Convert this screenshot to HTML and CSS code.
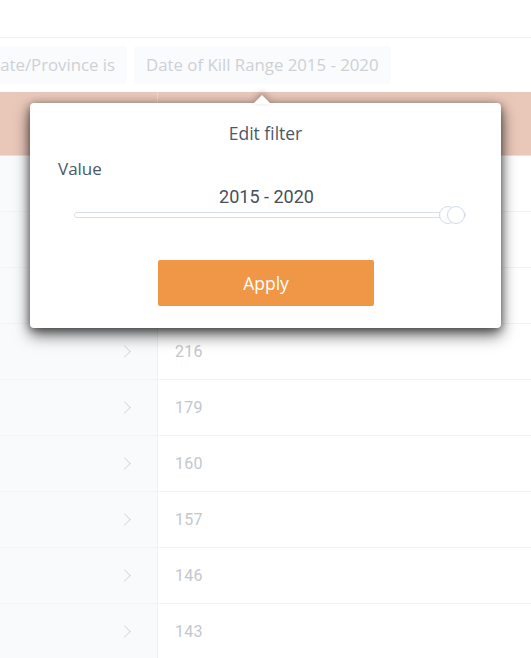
FILE: index.html
```html
<!DOCTYPE html>
<html>
<head>
<meta charset="utf-8">
<link rel="stylesheet" href="styles.css">
</head>
<body>
<div class="page">
  <div class="topbar"></div>
  <div class="filters">
    <div class="chip">State/Province is</div>
    <div class="chip">Date of Kill Range 2015 - 2020</div>
  </div>
  <div class="table">
    <div class="head-row"><div class="head-left"></div><div class="head-right"></div></div>
    <div class="row"><div class="cell-left"><span class="chev"></span></div><div class="cell-right">312</div></div>
    <div class="row"><div class="cell-left"><span class="chev"></span></div><div class="cell-right">268</div></div>
    <div class="row"><div class="cell-left"><span class="chev"></span></div><div class="cell-right">231</div></div>
    <div class="row"><div class="cell-left"><span class="chev"></span></div><div class="cell-right">216</div></div>
    <div class="row"><div class="cell-left"><span class="chev"></span></div><div class="cell-right">179</div></div>
    <div class="row"><div class="cell-left"><span class="chev"></span></div><div class="cell-right">160</div></div>
    <div class="row"><div class="cell-left"><span class="chev"></span></div><div class="cell-right">157</div></div>
    <div class="row"><div class="cell-left"><span class="chev"></span></div><div class="cell-right">146</div></div>
    <div class="row"><div class="cell-left"><span class="chev"></span></div><div class="cell-right">143</div></div>
  </div>

  <div class="popover">
    <div class="arrow"></div>
    <div class="pop-title">Edit filter</div>
    <div class="pop-label">Value</div>
    <div class="pop-value">2015 - 2020</div>
    <div class="slider">
      <div class="track"></div>
      <div class="handle h1"></div>
      <div class="handle h2"></div>
    </div>
    <div class="pop-actions">
      <button class="apply">Apply</button>
    </div>
  </div>
</div>
</body>
</html>
```
FILE: styles.css
```css
html, body {
  margin: 0;
  padding: 0;
  background: #ffffff;
}
.page {
  position: relative;
  width: 531px;
  height: 658px;
  overflow: hidden;
  font-family: "Open Sans", "Liberation Sans", sans-serif;
}
.topbar {
  height: 37px;
  border-bottom: 1px solid #f1f2f4;
}
.filters {
  height: 54px;
  display: flex;
  align-items: flex-start;
  gap: 7px;
  padding-top: 8px;
  box-sizing: border-box;
  margin-left: -27px;
}
.chip {
  flex: none;
  height: 38px;
  line-height: 38px;
  padding: 0 12px;
  background: #fafbfc;
  border-radius: 3px;
  color: #cdd1d6;
  font-size: 16.8px;
  white-space: nowrap;
}
.table {
  display: flex;
  flex-direction: column;
}
.head-row {
  height: 64px;
  display: flex;
  background: #e9c7b9;
  border-bottom: 1px solid #d6e6ec;
  box-sizing: border-box;
}
.head-left {
  width: 157px;
  flex: none;
  border-right: 1px solid #eed6cd;
}
.head-right {
  flex: 1;
}
.row {
  height: 56px;
  display: flex;
  border-bottom: 1px solid #f3f4f6;
  box-sizing: border-box;
}
.cell-left {
  width: 157px;
  flex: none;
  background: #f9fafc;
  border-right: 1px solid #eef0f2;
  position: relative;
}
.cell-right {
  flex: 1;
  padding-left: 17px;
  display: flex;
  align-items: center;
  font-family: Roboto, "Liberation Sans", sans-serif;
  font-size: 16px;
  letter-spacing: 0.3px;
  color: #c3c7cc;
}
.chev {
  position: absolute;
  left: 120px;
  top: 23px;
  width: 8px;
  height: 8px;
  border-top: 1.5px solid #d7dade;
  border-right: 1.5px solid #d7dade;
  transform: rotate(45deg);
}
.popover {
  position: absolute;
  left: 30px;
  top: 103px;
  width: 471px;
  height: 225px;
  background: #ffffff;
  border-radius: 4px;
  box-shadow: 0 7px 16px rgba(0, 0, 0, 0.6), 0 2px 8px rgba(0, 0, 0, 0.45);
  box-sizing: border-box;
  padding-top: 18px;
}
.arrow {
  position: absolute;
  left: 223px;
  top: -8px;
  width: 0;
  height: 0;
  border-left: 9px solid transparent;
  border-right: 9px solid transparent;
  border-bottom: 9px solid #ffffff;
  filter: drop-shadow(0 -3px 3px rgba(0,0,0,0.3));
}
.pop-title {
  text-align: center;
  font-size: 17.5px;
  line-height: 24px;
  color: #4c5869;
}
.pop-label {
  margin-top: 13px;
  padding-left: 28px;
  font-size: 17px;
  line-height: 22px;
  color: #4c5869;
}
.pop-value {
  margin-top: 7px;
  text-align: center;
  font-family: Roboto, "Liberation Sans", sans-serif;
  font-size: 18px;
  line-height: 20px;
  color: #464f5c;
  padding-left: 2px;
}
.slider {
  position: relative;
  height: 22px;
  margin: -3px 0 0 44px;
  width: 392px;
}
.track {
  position: absolute;
  left: 0;
  right: 0;
  top: 8px;
  height: 6px;
  box-sizing: border-box;
  border: 1px solid #d7dfe9;
  border-radius: 3px;
  background: #ffffff;
}
.handle {
  position: absolute;
  top: 2px;
  width: 18px;
  height: 18px;
  box-sizing: border-box;
  border: 1px solid #d2dbe6;
  border-radius: 50%;
  background: #ffffff;
}
.h1 { left: 365px; }
.h2 { left: 373px; }
.pop-actions {
  display: flex;
  justify-content: center;
  margin-top: 34px;
  padding-left: 1px;
}
.apply {
  width: 216px;
  height: 46px;
  border: none;
  border-radius: 2px;
  background: #ef9747;
  color: #ffffff;
  font-family: "Open Sans", "Liberation Sans", sans-serif;
  font-size: 17.5px;
  padding: 0;
}
```
